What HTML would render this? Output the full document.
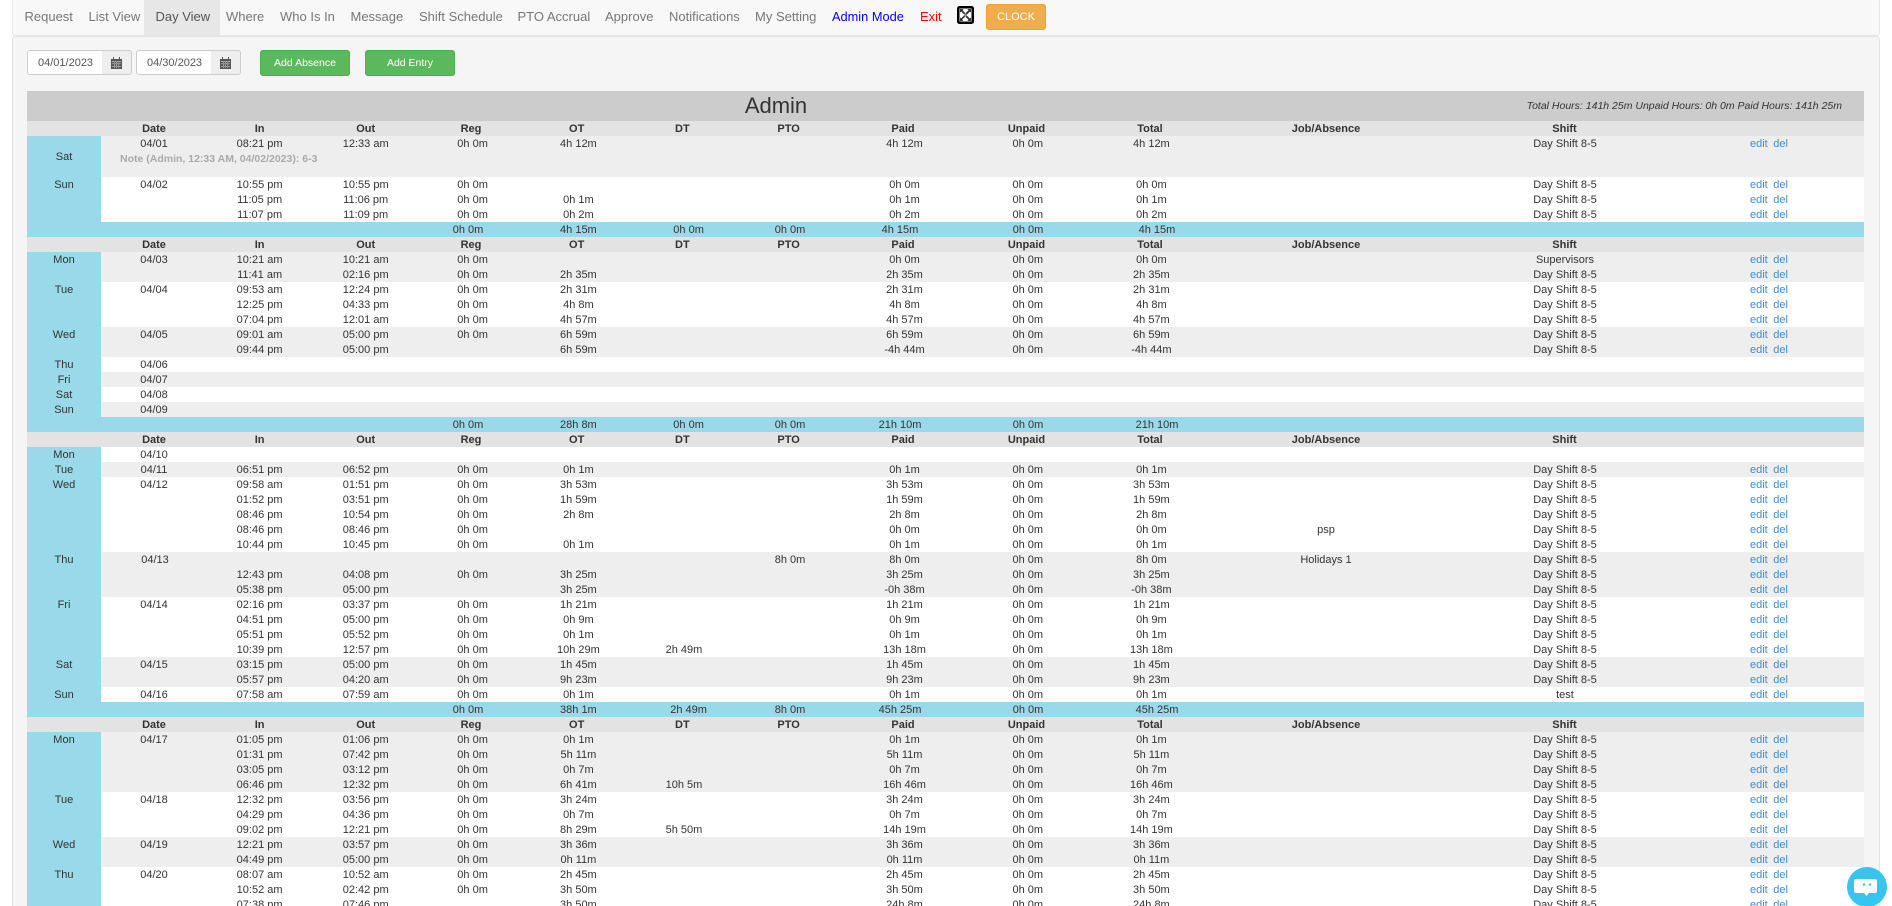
<!DOCTYPE html>
<html><head><meta charset="utf-8"><title>Day View</title>
<style>
html,body{margin:0;padding:0;background:#fff;width:1892px;height:906px;overflow:hidden;font:11px/15px "Liberation Sans",Arial,sans-serif;color:#333}
#wrap{position:relative;width:1892px;height:906px;overflow:hidden}
.abs,.nav a{position:absolute}
#nav{position:absolute;left:12px;top:0;width:1866px;height:35px;background:#f8f8f8;border:1px solid #e7e7e7;border-top:0;border-radius:0 0 3px 3px}
#panel{position:absolute;left:12px;top:36px;width:1866px;height:880px;background:#f5f5f5;border:1px solid #e3e3e3;border-radius:4px}
.nav a{top:0;height:35px;line-height:33px;font-size:13px;color:#777;text-decoration:none;white-space:nowrap}
#act{position:absolute;left:144px;top:0;width:76px;height:35px;background:#e7e7e7}
#clock{position:absolute;left:986px;top:4px;width:58px;height:24px;background:#f0ad4e;border:1px solid #eea236;border-radius:3px;color:#fff;text-align:center;line-height:24px;font-size:11px}
.inp{position:absolute;top:50px;height:23px;background:#fff;border:1px solid #ccc;border-radius:3px 0 0 3px;line-height:25px;font-size:11px;color:#555;padding-left:10px;box-sizing:content-box}
.add{position:absolute;top:50px;width:34px;height:23px;background:#eee;border:1px solid #ccc;border-left:0;border-radius:0 3px 3px 0}
.add svg{position:absolute;left:9px;top:6px}
.btn{position:absolute;top:50px;width:88px;height:24px;background:#5cb85c;border:1px solid #4cae4c;border-radius:3px;color:#fff;text-align:center;line-height:25px;font-size:10.5px}
#tb{position:absolute;left:27px;top:91px;width:1837px}
#ti{position:relative;height:30px;background:#ccc}
#ti .n{position:absolute;left:689px;width:120px;text-align:center;top:0;line-height:30px;font-size:22px;color:#333}
#ti .h{position:absolute;right:22px;top:0;line-height:30px;font-style:italic;font-size:10.500px}
.r{position:relative;height:15px}
.r::before{content:"";position:absolute;left:0;top:0;width:74px;height:100%;background:#99d9ea}
.w{background:#fff}.g{background:#eee}
.S{background:#99d9ea}
.H{background:#e3e3e3;font-weight:bold}
.H::before{display:none}
.r span{position:absolute;top:1px;width:120px;text-align:center;white-space:nowrap}
.b{left:-23px}.d{left:67px}.i{left:172.6px}.o{left:278.7px}.k{left:385.6px}.t{left:491.4px}.x{left:597px}.p{left:703px}.q{left:817.5px}.u{left:940.8px}.y{left:1064.4px}.j{left:1239px}.s{left:1478px}
.r span.e{left:1723px;width:60px;text-align:left;color:#428bca}
.e a{color:#428bca;text-decoration:none}.e a+a{margin-left:5.5px}
.S .k{left:381px}.S .x{left:601.6px}.S .q{left:813px}.S .u{left:941px}.S .y{left:1070px}
.H .k{left:384px}.H .t{left:489.7px}.H .x{left:595.4px}.H .p{left:701.6px}.H .q{left:816px}.H .u{left:939.5px}.H .y{left:1063px}.H .s{left:1477.5px}
.r span.nt{left:93px;top:16px;width:400px;text-align:left;color:#aaa;font-weight:bold;font-size:10.500px}
</style></head><body>
<div id="wrap">
<div id="nav"></div>
<div id="panel"></div>
<div id="act"></div>
<div class="nav">
<a style="left:24.5px">Request</a><a style="left:88.5px">List View</a><a style="left:155.5px;color:#555">Day View</a><a style="left:226px">Where</a><a style="left:280px">Who Is In</a><a style="left:350.5px">Message</a><a style="left:419px">Shift Schedule</a><a style="left:517.5px">PTO Accrual</a><a style="left:605px">Approve</a><a style="left:669px">Notifications</a><a style="left:755px">My Setting</a><a style="left:832px;color:#00f;font-size:12.8px">Admin Mode</a><a style="left:920px;color:#f00">Exit</a>
</div>
<svg class="abs" style="left:957px;top:6px" width="17" height="18" viewBox="0 0 17 18"><rect width="17" height="18" rx="2.500" fill="#000"/><rect x="2.500" y="2.500" width="12" height="13" fill="#fff"/><path d="M3 3h3.500L5.600 4.200 8.500 7.500 7 8.500 4.500 5.500 3 6.500zM14 3v3.500l-1.200-.9-3 3.200L8.500 7l3-2.500L10.500 3zM3 15v-3.500l1.200.9 3-3.200 1 1.500-3 2.800 1 1.500zM14 15h-3.500l1-1.300-3-3 1.300-1.200 3 3 1.200-1z" fill="#333"/><circle cx="8.500" cy="9" r="1.300" fill="#888"/></svg>
<div id="clock">CLOCK</div>
<div class="inp" style="left:27px;width:64px">04/01/2023</div><div class="add" style="left:102px;width:29px"><svg width="11" height="12" viewBox="0 0 11 12"><path d="M0 2h2V0h1v2h5V0h1v2h2v10H0z" fill="#555"/><path d="M1 4h9v.8H1zM1 6.500h9v.6H1zM1 9h9v.6H1zM3 4v7h.6V4zM5.200 4v7h.6V4zM7.500 4v7h.6V4z" fill="#ccc"/></svg></div>
<div class="inp" style="left:136px;width:64px">04/30/2023</div><div class="add" style="left:211px;width:29px"><svg width="11" height="12" viewBox="0 0 11 12"><path d="M0 2h2V0h1v2h5V0h1v2h2v10H0z" fill="#555"/><path d="M1 4h9v.8H1zM1 6.500h9v.6H1zM1 9h9v.6H1zM3 4v7h.6V4zM5.200 4v7h.6V4zM7.500 4v7h.6V4z" fill="#ccc"/></svg></div>
<div class="btn" style="left:260px">Add Absence</div>
<div class="btn" style="left:365px">Add Entry</div>
<div id="tb">
<div id="ti"><div class="n">Admin</div><div class="h">Total Hours: 141h 25m Unpaid Hours: 0h 0m Paid Hours: 141h 25m</div></div>
<div class="r H"><span class="d">Date</span><span class="i">In</span><span class="o">Out</span><span class="k">Reg</span><span class="t">OT</span><span class="x">DT</span><span class="p">PTO</span><span class="q">Paid</span><span class="u">Unpaid</span><span class="y">Total</span><span class="j">Job/Absence</span><span class="s">Shift</span></div>
<div class="r g" style="height:41px"><span class="b" style="line-height:41px">Sat</span><span class="d">04/01</span><span class="i">08:21 pm</span><span class="o">12:33 am</span><span class="k">0h 0m</span><span class="t">4h 12m</span><span class="q">4h 12m</span><span class="u">0h 0m</span><span class="y">4h 12m</span><span class="s">Day Shift 8-5</span><span class="e"><a href="#">edit</a><a href="#">del</a></span><span class="nt">Note (Admin, 12:33 AM, 04/02/2023): 6-3</span></div>
<div class="r w"><span class="b">Sun</span><span class="d">04/02</span><span class="i">10:55 pm</span><span class="o">10:55 pm</span><span class="k">0h 0m</span><span class="q">0h 0m</span><span class="u">0h 0m</span><span class="y">0h 0m</span><span class="s">Day Shift 8-5</span><span class="e"><a href="#">edit</a><a href="#">del</a></span></div>
<div class="r w"><span class="i">11:05 pm</span><span class="o">11:06 pm</span><span class="k">0h 0m</span><span class="t">0h 1m</span><span class="q">0h 1m</span><span class="u">0h 0m</span><span class="y">0h 1m</span><span class="s">Day Shift 8-5</span><span class="e"><a href="#">edit</a><a href="#">del</a></span></div>
<div class="r w"><span class="i">11:07 pm</span><span class="o">11:09 pm</span><span class="k">0h 0m</span><span class="t">0h 2m</span><span class="q">0h 2m</span><span class="u">0h 0m</span><span class="y">0h 2m</span><span class="s">Day Shift 8-5</span><span class="e"><a href="#">edit</a><a href="#">del</a></span></div>
<div class="r S"><span class="k">0h 0m</span><span class="t">4h 15m</span><span class="x">0h 0m</span><span class="p">0h 0m</span><span class="q">4h 15m</span><span class="u">0h 0m</span><span class="y">4h 15m</span></div>
<div class="r H"><span class="d">Date</span><span class="i">In</span><span class="o">Out</span><span class="k">Reg</span><span class="t">OT</span><span class="x">DT</span><span class="p">PTO</span><span class="q">Paid</span><span class="u">Unpaid</span><span class="y">Total</span><span class="j">Job/Absence</span><span class="s">Shift</span></div>
<div class="r g"><span class="b">Mon</span><span class="d">04/03</span><span class="i">10:21 am</span><span class="o">10:21 am</span><span class="k">0h 0m</span><span class="q">0h 0m</span><span class="u">0h 0m</span><span class="y">0h 0m</span><span class="s">Supervisors</span><span class="e"><a href="#">edit</a><a href="#">del</a></span></div>
<div class="r g"><span class="i">11:41 am</span><span class="o">02:16 pm</span><span class="k">0h 0m</span><span class="t">2h 35m</span><span class="q">2h 35m</span><span class="u">0h 0m</span><span class="y">2h 35m</span><span class="s">Day Shift 8-5</span><span class="e"><a href="#">edit</a><a href="#">del</a></span></div>
<div class="r w"><span class="b">Tue</span><span class="d">04/04</span><span class="i">09:53 am</span><span class="o">12:24 pm</span><span class="k">0h 0m</span><span class="t">2h 31m</span><span class="q">2h 31m</span><span class="u">0h 0m</span><span class="y">2h 31m</span><span class="s">Day Shift 8-5</span><span class="e"><a href="#">edit</a><a href="#">del</a></span></div>
<div class="r w"><span class="i">12:25 pm</span><span class="o">04:33 pm</span><span class="k">0h 0m</span><span class="t">4h 8m</span><span class="q">4h 8m</span><span class="u">0h 0m</span><span class="y">4h 8m</span><span class="s">Day Shift 8-5</span><span class="e"><a href="#">edit</a><a href="#">del</a></span></div>
<div class="r w"><span class="i">07:04 pm</span><span class="o">12:01 am</span><span class="k">0h 0m</span><span class="t">4h 57m</span><span class="q">4h 57m</span><span class="u">0h 0m</span><span class="y">4h 57m</span><span class="s">Day Shift 8-5</span><span class="e"><a href="#">edit</a><a href="#">del</a></span></div>
<div class="r g"><span class="b">Wed</span><span class="d">04/05</span><span class="i">09:01 am</span><span class="o">05:00 pm</span><span class="k">0h 0m</span><span class="t">6h 59m</span><span class="q">6h 59m</span><span class="u">0h 0m</span><span class="y">6h 59m</span><span class="s">Day Shift 8-5</span><span class="e"><a href="#">edit</a><a href="#">del</a></span></div>
<div class="r g"><span class="i">09:44 pm</span><span class="o">05:00 pm</span><span class="t">6h 59m</span><span class="q">-4h 44m</span><span class="u">0h 0m</span><span class="y">-4h 44m</span><span class="s">Day Shift 8-5</span><span class="e"><a href="#">edit</a><a href="#">del</a></span></div>
<div class="r w"><span class="b">Thu</span><span class="d">04/06</span></div>
<div class="r g"><span class="b">Fri</span><span class="d">04/07</span></div>
<div class="r w"><span class="b">Sat</span><span class="d">04/08</span></div>
<div class="r g"><span class="b">Sun</span><span class="d">04/09</span></div>
<div class="r S"><span class="k">0h 0m</span><span class="t">28h 8m</span><span class="x">0h 0m</span><span class="p">0h 0m</span><span class="q">21h 10m</span><span class="u">0h 0m</span><span class="y">21h 10m</span></div>
<div class="r H"><span class="d">Date</span><span class="i">In</span><span class="o">Out</span><span class="k">Reg</span><span class="t">OT</span><span class="x">DT</span><span class="p">PTO</span><span class="q">Paid</span><span class="u">Unpaid</span><span class="y">Total</span><span class="j">Job/Absence</span><span class="s">Shift</span></div>
<div class="r w"><span class="b">Mon</span><span class="d">04/10</span></div>
<div class="r g"><span class="b">Tue</span><span class="d">04/11</span><span class="i">06:51 pm</span><span class="o">06:52 pm</span><span class="k">0h 0m</span><span class="t">0h 1m</span><span class="q">0h 1m</span><span class="u">0h 0m</span><span class="y">0h 1m</span><span class="s">Day Shift 8-5</span><span class="e"><a href="#">edit</a><a href="#">del</a></span></div>
<div class="r w"><span class="b">Wed</span><span class="d">04/12</span><span class="i">09:58 am</span><span class="o">01:51 pm</span><span class="k">0h 0m</span><span class="t">3h 53m</span><span class="q">3h 53m</span><span class="u">0h 0m</span><span class="y">3h 53m</span><span class="s">Day Shift 8-5</span><span class="e"><a href="#">edit</a><a href="#">del</a></span></div>
<div class="r w"><span class="i">01:52 pm</span><span class="o">03:51 pm</span><span class="k">0h 0m</span><span class="t">1h 59m</span><span class="q">1h 59m</span><span class="u">0h 0m</span><span class="y">1h 59m</span><span class="s">Day Shift 8-5</span><span class="e"><a href="#">edit</a><a href="#">del</a></span></div>
<div class="r w"><span class="i">08:46 pm</span><span class="o">10:54 pm</span><span class="k">0h 0m</span><span class="t">2h 8m</span><span class="q">2h 8m</span><span class="u">0h 0m</span><span class="y">2h 8m</span><span class="s">Day Shift 8-5</span><span class="e"><a href="#">edit</a><a href="#">del</a></span></div>
<div class="r w"><span class="i">08:46 pm</span><span class="o">08:46 pm</span><span class="k">0h 0m</span><span class="q">0h 0m</span><span class="u">0h 0m</span><span class="y">0h 0m</span><span class="j">psp</span><span class="s">Day Shift 8-5</span><span class="e"><a href="#">edit</a><a href="#">del</a></span></div>
<div class="r w"><span class="i">10:44 pm</span><span class="o">10:45 pm</span><span class="k">0h 0m</span><span class="t">0h 1m</span><span class="q">0h 1m</span><span class="u">0h 0m</span><span class="y">0h 1m</span><span class="s">Day Shift 8-5</span><span class="e"><a href="#">edit</a><a href="#">del</a></span></div>
<div class="r g"><span class="b">Thu</span><span class="d" style="left:68px">04/13</span><span class="p">8h 0m</span><span class="q">8h 0m</span><span class="u">0h 0m</span><span class="y">8h 0m</span><span class="j">Holidays 1</span><span class="s">Day Shift 8-5</span><span class="e"><a href="#">edit</a><a href="#">del</a></span></div>
<div class="r g"><span class="i">12:43 pm</span><span class="o">04:08 pm</span><span class="k">0h 0m</span><span class="t">3h 25m</span><span class="q">3h 25m</span><span class="u">0h 0m</span><span class="y">3h 25m</span><span class="s">Day Shift 8-5</span><span class="e"><a href="#">edit</a><a href="#">del</a></span></div>
<div class="r g"><span class="i">05:38 pm</span><span class="o">05:00 pm</span><span class="t">3h 25m</span><span class="q">-0h 38m</span><span class="u">0h 0m</span><span class="y">-0h 38m</span><span class="s">Day Shift 8-5</span><span class="e"><a href="#">edit</a><a href="#">del</a></span></div>
<div class="r w"><span class="b">Fri</span><span class="d">04/14</span><span class="i">02:16 pm</span><span class="o">03:37 pm</span><span class="k">0h 0m</span><span class="t">1h 21m</span><span class="q">1h 21m</span><span class="u">0h 0m</span><span class="y">1h 21m</span><span class="s">Day Shift 8-5</span><span class="e"><a href="#">edit</a><a href="#">del</a></span></div>
<div class="r w"><span class="i">04:51 pm</span><span class="o">05:00 pm</span><span class="k">0h 0m</span><span class="t">0h 9m</span><span class="q">0h 9m</span><span class="u">0h 0m</span><span class="y">0h 9m</span><span class="s">Day Shift 8-5</span><span class="e"><a href="#">edit</a><a href="#">del</a></span></div>
<div class="r w"><span class="i">05:51 pm</span><span class="o">05:52 pm</span><span class="k">0h 0m</span><span class="t">0h 1m</span><span class="q">0h 1m</span><span class="u">0h 0m</span><span class="y">0h 1m</span><span class="s">Day Shift 8-5</span><span class="e"><a href="#">edit</a><a href="#">del</a></span></div>
<div class="r w"><span class="i">10:39 pm</span><span class="o">12:57 pm</span><span class="k">0h 0m</span><span class="t">10h 29m</span><span class="x">2h 49m</span><span class="q">13h 18m</span><span class="u">0h 0m</span><span class="y">13h 18m</span><span class="s">Day Shift 8-5</span><span class="e"><a href="#">edit</a><a href="#">del</a></span></div>
<div class="r g"><span class="b">Sat</span><span class="d">04/15</span><span class="i">03:15 pm</span><span class="o">05:00 pm</span><span class="k">0h 0m</span><span class="t">1h 45m</span><span class="q">1h 45m</span><span class="u">0h 0m</span><span class="y">1h 45m</span><span class="s">Day Shift 8-5</span><span class="e"><a href="#">edit</a><a href="#">del</a></span></div>
<div class="r g"><span class="i">05:57 pm</span><span class="o">04:20 am</span><span class="k">0h 0m</span><span class="t">9h 23m</span><span class="q">9h 23m</span><span class="u">0h 0m</span><span class="y">9h 23m</span><span class="s">Day Shift 8-5</span><span class="e"><a href="#">edit</a><a href="#">del</a></span></div>
<div class="r w"><span class="b">Sun</span><span class="d">04/16</span><span class="i">07:58 am</span><span class="o">07:59 am</span><span class="k">0h 0m</span><span class="t">0h 1m</span><span class="q">0h 1m</span><span class="u">0h 0m</span><span class="y">0h 1m</span><span class="s">test</span><span class="e"><a href="#">edit</a><a href="#">del</a></span></div>
<div class="r S"><span class="k">0h 0m</span><span class="t">38h 1m</span><span class="x">2h 49m</span><span class="p">8h 0m</span><span class="q">45h 25m</span><span class="u">0h 0m</span><span class="y">45h 25m</span></div>
<div class="r H"><span class="d">Date</span><span class="i">In</span><span class="o">Out</span><span class="k">Reg</span><span class="t">OT</span><span class="x">DT</span><span class="p">PTO</span><span class="q">Paid</span><span class="u">Unpaid</span><span class="y">Total</span><span class="j">Job/Absence</span><span class="s">Shift</span></div>
<div class="r g"><span class="b">Mon</span><span class="d">04/17</span><span class="i">01:05 pm</span><span class="o">01:06 pm</span><span class="k">0h 0m</span><span class="t">0h 1m</span><span class="q">0h 1m</span><span class="u">0h 0m</span><span class="y">0h 1m</span><span class="s">Day Shift 8-5</span><span class="e"><a href="#">edit</a><a href="#">del</a></span></div>
<div class="r g"><span class="i">01:31 pm</span><span class="o">07:42 pm</span><span class="k">0h 0m</span><span class="t">5h 11m</span><span class="q">5h 11m</span><span class="u">0h 0m</span><span class="y">5h 11m</span><span class="s">Day Shift 8-5</span><span class="e"><a href="#">edit</a><a href="#">del</a></span></div>
<div class="r g"><span class="i">03:05 pm</span><span class="o">03:12 pm</span><span class="k">0h 0m</span><span class="t">0h 7m</span><span class="q">0h 7m</span><span class="u">0h 0m</span><span class="y">0h 7m</span><span class="s">Day Shift 8-5</span><span class="e"><a href="#">edit</a><a href="#">del</a></span></div>
<div class="r g"><span class="i">06:46 pm</span><span class="o">12:32 pm</span><span class="k">0h 0m</span><span class="t">6h 41m</span><span class="x">10h 5m</span><span class="q">16h 46m</span><span class="u">0h 0m</span><span class="y">16h 46m</span><span class="s">Day Shift 8-5</span><span class="e"><a href="#">edit</a><a href="#">del</a></span></div>
<div class="r w"><span class="b">Tue</span><span class="d">04/18</span><span class="i">12:32 pm</span><span class="o">03:56 pm</span><span class="k">0h 0m</span><span class="t">3h 24m</span><span class="q">3h 24m</span><span class="u">0h 0m</span><span class="y">3h 24m</span><span class="s">Day Shift 8-5</span><span class="e"><a href="#">edit</a><a href="#">del</a></span></div>
<div class="r w"><span class="i">04:29 pm</span><span class="o">04:36 pm</span><span class="k">0h 0m</span><span class="t">0h 7m</span><span class="q">0h 7m</span><span class="u">0h 0m</span><span class="y">0h 7m</span><span class="s">Day Shift 8-5</span><span class="e"><a href="#">edit</a><a href="#">del</a></span></div>
<div class="r w"><span class="i">09:02 pm</span><span class="o">12:21 pm</span><span class="k">0h 0m</span><span class="t">8h 29m</span><span class="x">5h 50m</span><span class="q">14h 19m</span><span class="u">0h 0m</span><span class="y">14h 19m</span><span class="s">Day Shift 8-5</span><span class="e"><a href="#">edit</a><a href="#">del</a></span></div>
<div class="r g"><span class="b">Wed</span><span class="d">04/19</span><span class="i">12:21 pm</span><span class="o">03:57 pm</span><span class="k">0h 0m</span><span class="t">3h 36m</span><span class="q">3h 36m</span><span class="u">0h 0m</span><span class="y">3h 36m</span><span class="s">Day Shift 8-5</span><span class="e"><a href="#">edit</a><a href="#">del</a></span></div>
<div class="r g"><span class="i">04:49 pm</span><span class="o">05:00 pm</span><span class="k">0h 0m</span><span class="t">0h 11m</span><span class="q">0h 11m</span><span class="u">0h 0m</span><span class="y">0h 11m</span><span class="s">Day Shift 8-5</span><span class="e"><a href="#">edit</a><a href="#">del</a></span></div>
<div class="r w"><span class="b">Thu</span><span class="d">04/20</span><span class="i">08:07 am</span><span class="o">10:52 am</span><span class="k">0h 0m</span><span class="t">2h 45m</span><span class="q">2h 45m</span><span class="u">0h 0m</span><span class="y">2h 45m</span><span class="s">Day Shift 8-5</span><span class="e"><a href="#">edit</a><a href="#">del</a></span></div>
<div class="r w"><span class="i">10:52 am</span><span class="o">02:42 pm</span><span class="k">0h 0m</span><span class="t">3h 50m</span><span class="q">3h 50m</span><span class="u">0h 0m</span><span class="y">3h 50m</span><span class="s">Day Shift 8-5</span><span class="e"><a href="#">edit</a><a href="#">del</a></span></div>
<div class="r w"><span class="i">07:38 pm</span><span class="o">07:46 pm</span><span class="t">3h 50m</span><span class="q">24h 8m</span><span class="u">0h 0m</span><span class="y">24h 8m</span><span class="s">Day Shift 8-5</span><span class="e"><a href="#">edit</a><a href="#">del</a></span></div>
</div>
<svg class="abs" style="left:1847px;top:867px" width="40" height="39" viewBox="0 0 40 39"><circle cx="20" cy="20" r="20" fill="#35c5ee"/><path d="M11 12h17a2 2 0 0 1 2 2v10a2 2 0 0 1-2 2h-6l-2.500 3-2.500-3h-8a2 2 0 0 1-2-2V14a2 2 0 0 1 2-2z" fill="#fff"/><circle cx="17" cy="17.500" r="1.200" fill="#35c5ee"/><circle cx="23" cy="17.500" r="1.200" fill="#35c5ee"/></svg>
</div>
</body></html>
